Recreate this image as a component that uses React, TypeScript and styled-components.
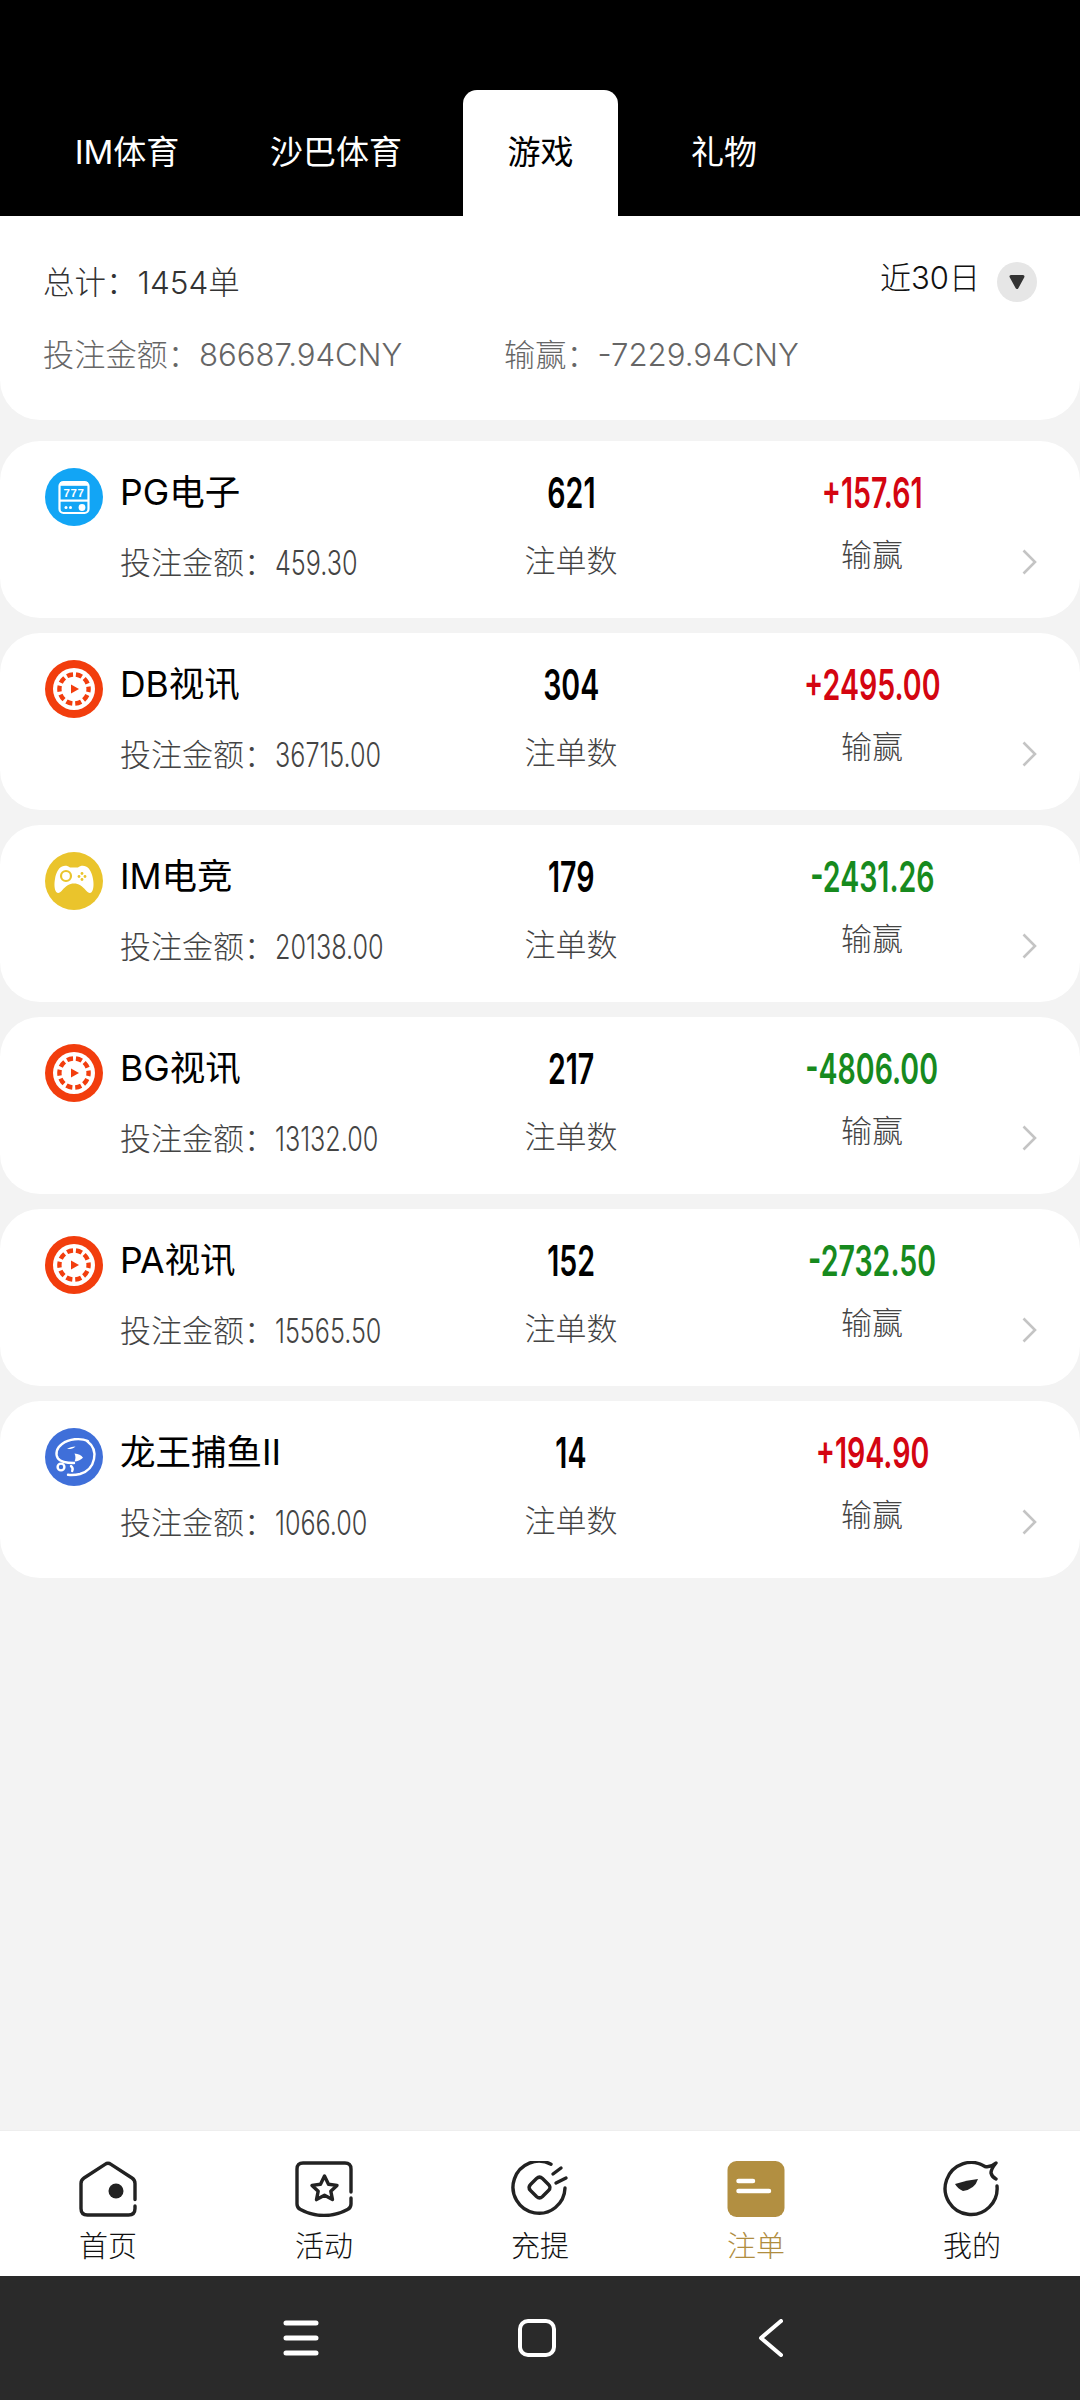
import React from "react";
import styled, { createGlobalStyle } from "styled-components";

const Global = createGlobalStyle`
  html, body { margin: 0; padding: 0; background: #f3f3f3; }
  * { box-sizing: border-box; }
  body { font-family: Inter, "Noto Sans CJK SC", "Noto Sans", sans-serif; }
`;

const Page = styled.div`
  width: 1080px;
  height: 2400px;
  display: flex;
  flex-direction: column;
  background: #f3f3f3;
  overflow: hidden;
`;

const Header = styled.header`
  height: 216px;
  flex: none;
  background: #000;
  padding: 90px 0 0 31px;
  display: flex;
  align-items: stretch;
`;

const Tab = styled.div<{ $w: number; $active?: boolean }>`
  width: ${(p) => p.$w}px;
  margin: 0 ${(p) => (p.$active ? 14 : 0)}px;
  padding-bottom: 6px;
  display: flex;
  align-items: center;
  justify-content: center;
  font-size: 33px;
  font-weight: 400;
  color: ${(p) => (p.$active ? "#000" : "#fff")};
  background: ${(p) => (p.$active ? "#fff" : "transparent")};
  border-radius: 14px 14px 0 0;
`;

const Summary = styled.section`
  height: 204px;
  flex: none;
  background: #fff;
  border-radius: 0 0 40px 40px;
  padding: 44px 43px 0 43px;
  display: flex;
  flex-direction: column;
`;

const SummaryTop = styled.div`
  display: flex;
  justify-content: space-between;
  align-items: flex-start;
  height: 72px;
`;

const Total = styled.div`
  font-size: 31.5px;
  font-weight: 300;
  line-height: 46px;
  color: #333;
`;

const Range = styled.div`
  display: flex;
  align-items: center;
  gap: 17px;
  margin-top: -7px;
  font-size: 31px;
  font-weight: 300;
  line-height: 46px;
  color: #111;
`;

const RangeButton = styled.span`
  width: 40px;
  height: 40px;
  border-radius: 50%;
  background: #e6e6e6;
  display: flex;
  align-items: center;
  justify-content: center;
  margin-top: 9px;
`;

const SummaryStats = styled.div`
  display: flex;
  font-size: 31.2px;
  font-weight: 300;
  line-height: 46px;
  color: #666;
`;

const StatCell = styled.span<{ $w?: number }>`
  width: ${(p) => (p.$w ? `${p.$w}px` : "auto")};
`;

const List = styled.main`
  flex: 1;
  padding-top: 21px;
  display: flex;
  flex-direction: column;
  gap: 15px;
`;

const Card = styled.article`
  height: 177px;
  background: #fff;
  border-radius: 40px;
  padding: 0 0 0 45px;
  display: grid;
  grid-template-columns: 426px 200px 351px 15px;
`;

const Lead = styled.div`
  display: grid;
  grid-template-columns: 58px 1fr;
  grid-template-rows: 86px 56px;
  column-gap: 17px;
`;

const GameIcon = styled.span`
  width: 58px;
  height: 58px;
  margin-top: 27px;
  display: block;
  svg {
    display: block;
  }
`;

const Name = styled.div`
  font-size: 35.5px;
  font-weight: 400;
  color: #000;
  padding-top: 27px;
  line-height: 50px;
  white-space: nowrap;
`;

const Amount = styled.div`
  grid-column: 2;
  font-size: 31px;
  font-weight: 300;
  color: #444;
  line-height: 46px;
  padding-top: 13px;
  white-space: nowrap;
  display: flex;
`;

const Narrow = styled.span<{ $scale: number; $origin?: string }>`
  display: inline-block;
  font-family: Inter, "Liberation Sans", sans-serif;
  transform: scaleX(${(p) => p.$scale});
  transform-origin: ${(p) => p.$origin ?? "center"};
`;

const AmountValue = styled(Narrow)`
  font-size: 34px;
  font-weight: 300;
  margin-top: 0;
`;

const Metric = styled.div<{ $pad?: number }>`
  display: flex;
  flex-direction: column;
  align-items: center;
  padding-left: ${(p) => p.$pad ?? 0}px;
`;

const Value = styled(Narrow)<{ $color?: string }>`
  font-size: 42px;
  font-weight: 600;
  line-height: 48px;
  margin-top: 28px;
  color: ${(p) => p.$color ?? "#000"};
`;

const Label = styled.div<{ $top: number }>`
  font-size: 31px;
  font-weight: 300;
  line-height: 46px;
  color: #444;
  margin-top: ${(p) => p.$top}px;
`;

const Chevron = styled.div`
  padding-top: 108px;
  svg {
    display: block;
  }
`;

const TabBar = styled.nav`
  height: 146px;
  flex: none;
  background: #fff;
  border-top: 1px solid #eee;
  display: grid;
  grid-template-columns: repeat(5, 1fr);
  padding-top: 30px;
`;

const BarItem = styled.div<{ $active?: boolean }>`
  display: flex;
  flex-direction: column;
  align-items: center;
  font-size: 29px;
  font-weight: 300;
  line-height: 40px;
  color: ${(p) => (p.$active ? "#b08d3f" : "#111")};
  svg {
    display: block;
    margin-bottom: 10px;
  }
`;

const SystemBar = styled.div`
  height: 124px;
  flex: none;
  background: #2a2a2a;
  display: flex;
  align-items: center;
  padding-left: 283px;
  gap: 199px;
  svg {
    display: block;
  }
`;

const SlotIcon = () => (
  <svg width="58" height="58" viewBox="0 0 58 58">
    <circle cx="29" cy="29" r="29" fill="#12a5f5" />
    <rect x="14.500" y="14" width="29" height="31" rx="4" fill="none" stroke="#fff" strokeWidth="2.200" />
    <rect x="15" y="14" width="28" height="3.800" fill="#fff" />
    <text x="29" y="28.500" textAnchor="middle" fontFamily="Liberation Sans" fontWeight="700" fontSize="11.500" fill="#fff" letterSpacing="0.600">777</text>
    <rect x="15" y="31.500" width="28" height="2.200" fill="#fff" />
    <circle cx="21" cy="39.500" r="1.500" fill="#fff" />
    <circle cx="25.500" cy="39.500" r="1.500" fill="#fff" />
    <circle cx="37" cy="39.500" r="3.400" fill="#fff" />
  </svg>
);

const ReelIcon = () => (
  <svg width="58" height="58" viewBox="0 0 58 58">
    <circle cx="29" cy="29" r="29" fill="#f23d0d" />
    <circle cx="29" cy="29" r="21" fill="#fff" />
    <circle cx="29" cy="29" r="14.600" fill="none" stroke="#f23d0d" strokeWidth="4.400" strokeDasharray="6.170 3" strokeDashoffset="3" />
    <path d="M26 24.500 34 29l-8 4.500z" fill="#f23d0d" />
  </svg>
);

const PadIcon = () => (
  <svg width="58" height="58" viewBox="0 0 58 58">
    <circle cx="29" cy="29" r="29" fill="#eac42c" />
    <path d="M17 14.500c3-1.400 6-.6 8 .9h8c2-1.500 5-2.300 8-.9 3.800 1.800 6 6.500 7 12.500 1 5.500.6 11-1.500 13.200-1.500 1.600-3.500.6-5.500-1.700-4-4.800-7.200-7-12-7s-8 2.200-12 7c-2 2.300-4 3.300-5.500 1.700C9.400 38 9 32.500 10 27c1-6 3.200-10.700 7-12.500z" fill="#fff" />
    <circle cx="21" cy="24" r="5" fill="none" stroke="#eac42c" strokeWidth="2.200" />
    <circle cx="37" cy="21.500" r="1.400" fill="#eac42c" />
    <circle cx="37" cy="27.500" r="1.400" fill="#eac42c" />
    <circle cx="34" cy="24.500" r="1.400" fill="#eac42c" />
    <circle cx="40" cy="24.500" r="1.400" fill="#eac42c" />
  </svg>
);

const FishIcon = () => (
  <svg width="58" height="58" viewBox="0 0 58 58">
    <circle cx="29" cy="29" r="29" fill="#3f6fd9" />
    <g fill="none" stroke="#fff" strokeWidth="2.400" strokeLinecap="round">
      <path d="M43 13C35 9.500 24 11 17 16c-5.500 4-7 10-4 14.500 2.500 3.500 9 4.500 16 4.500" />
      <path d="M42 13c6 4.500 8.500 11 7 18-1.500 7.500-7 13-14 15-4 1-8 1.200-12 .8" />
      <circle cx="16" cy="39" r="3.400" />
      <path d="M26 38c1.500 1.200 2 3.300 1.200 5" />
    </g>
    <path d="M22 21c2.500-1.800 5-2.600 8.500-2.600-2.200 2-5 2.900-8.500 2.600z" fill="#fff" />
    <path d="M29.500 25.500c3.800.2 7 1.800 8.500 4.300-2.300 2.500-5.500 3.600-8.500 3.700 1.300-2.600 1.300-5.400 0-8z" fill="#fff" />
  </svg>
);

const HomeGlyph = () => (
  <svg width="58" height="56" viewBox="0 0 58 56" fill="none" stroke="#222" strokeWidth="3.400" strokeLinecap="round">
    <path d="M56 38.500V22.500q0-3.500-3-5.500L32 3.300q-3-2-6 0L5 17q-3 2-3 5.500V47.500q0 6.500 6.500 6.500h41q6.500 0 6.500-6.500V45" />
    <circle cx="37" cy="30" r="7.500" fill="#222" stroke="none" />
  </svg>
);

const ActivityGlyph = () => (
  <svg width="58" height="56" viewBox="0 0 58 56" fill="none" stroke="#222" strokeWidth="3.400" strokeLinecap="round" strokeLinejoin="round">
    <path d="M56 31V8q0-6-6-6H8Q2 2 2 8v35q0 4 3.500 5.500 11 6 23.500 6t23.500-6Q56 47 56 43v-6" />
    <path d="M29.500 15l4 8.300 8.500 1.100-6.200 5.800 1.700 8.400-8-4.300-8 4.300 1.700-8.400-6.200-5.800 8.500-1.100z" />
  </svg>
);

const ChargeGlyph = () => (
  <svg width="58" height="56" viewBox="0 0 58 56" fill="none" stroke="#222" strokeWidth="3.400" strokeLinecap="round" strokeLinejoin="round">
    <path d="M40 3.200A26 26 0 1 0 54 27" />
    <path d="M25.500 17.500q3-2.800 6 0l6 6q3 3 0 6l-6 6q-3 2.800-6 0l-6-6q-3-3 0-6z" />
    <path d="M42 13l8-6M45 22l10-5" />
  </svg>
);

const OrderGlyph = () => (
  <svg width="58" height="56" viewBox="0 0 58 56">
    <rect x="0.500" width="57" height="56" rx="9" fill="#b28f41" />
    <path d="M11.500 20H26M11.500 30H42" stroke="#fff" strokeWidth="4.500" strokeLinecap="round" />
  </svg>
);

const MineGlyph = () => (
  <svg width="58" height="56" viewBox="0 0 58 56" fill="none" stroke="#222" strokeWidth="3.400" strokeLinecap="round" strokeLinejoin="round">
    <path d="M54 25A26 26 0 1 1 42 5.500Q48 6.500 53 2Q48 8 48 12Q49 16 53 18" />
    <path d="M12 23Q24 19 35 18Q32 28 20 30Q15 28 12 23z" fill="#222" stroke="none" />
  </svg>
);

const bets = [
  { name: "PG电子", icon: <SlotIcon />, amount: "459.30", count: "621", profit: "+157.61" },
  { name: "DB视讯", icon: <ReelIcon />, amount: "36715.00", count: "304", profit: "+2495.00" },
  { name: "IM电竞", icon: <PadIcon />, amount: "20138.00", count: "179", profit: "-2431.26" },
  { name: "BG视讯", icon: <ReelIcon />, amount: "13132.00", count: "217", profit: "-4806.00" },
  { name: "PA视讯", icon: <ReelIcon />, amount: "15565.50", count: "152", profit: "-2732.50" },
  { name: "龙王捕鱼II", icon: <FishIcon />, amount: "1066.00", count: "14", profit: "+194.90" },
];

const barItems = [
  { label: "首页", icon: <HomeGlyph /> },
  { label: "活动", icon: <ActivityGlyph /> },
  { label: "充提", icon: <ChargeGlyph /> },
  { label: "注单", icon: <OrderGlyph />, active: true },
  { label: "我的", icon: <MineGlyph /> },
];

export default function App() {
  return (
    <Page>
      <Global />
      <Header>
        <Tab $w={192}>IM体育</Tab>
        <Tab $w={226}>沙巴体育</Tab>
        <Tab $w={155} $active>游戏</Tab>
        <Tab $w={184}>礼物</Tab>
      </Header>
      <Summary>
        <SummaryTop>
          <Total>总计：1454单</Total>
          <Range>
            近30日
            <RangeButton>
              <svg width="18" height="16" viewBox="0 0 18 16">
                <path d="M3 2.500h12L9 13.500z" fill="#333" stroke="#333" strokeWidth="3" strokeLinejoin="round" />
              </svg>
            </RangeButton>
          </Range>
        </SummaryTop>
        <SummaryStats>
          <StatCell $w={461}>投注金额：86687.94CNY</StatCell>
          <StatCell>输赢：-7229.94CNY</StatCell>
        </SummaryStats>
      </Summary>
      <List>
        {bets.map((b) => (
          <Card key={b.name}>
            <Lead>
              <GameIcon>{b.icon}</GameIcon>
              <Name>{b.name}</Name>
              <Amount>
                投注金额：<AmountValue $scale={0.74} $origin="left">{b.amount}</AmountValue>
              </Amount>
            </Lead>
            <Metric>
              <Value $scale={0.68}>{b.count}</Value>
              <Label $top={21}>注单数</Label>
            </Metric>
            <Metric $pad={51}>
              <Value $scale={0.68} $color={b.profit.startsWith("+") ? "#d40511" : "#178a1e"}>{b.profit}</Value>
              <Label $top={15}>输赢</Label>
            </Metric>
            <Chevron>
              <svg width="15" height="26" viewBox="0 0 15 26" fill="none" stroke="#c4c4c4" strokeWidth="2.600">
                <path d="M1.500 1.500 13 13 1.500 24.500" />
              </svg>
            </Chevron>
          </Card>
        ))}
      </List>
      <TabBar>
        {barItems.map((it) => (
          <BarItem key={it.label} $active={it.active}>
            {it.icon}
            {it.label}
          </BarItem>
        ))}
      </TabBar>
      <SystemBar>
        <svg width="36" height="36" viewBox="0 0 36 36" stroke="#fff" strokeWidth="5" strokeLinecap="round">
          <path d="M3 3h30M3 18h30M3 33h30" />
        </svg>
        <svg width="38" height="38" viewBox="0 0 38 38" fill="none" stroke="#fff" strokeWidth="4">
          <rect x="2" y="2" width="34" height="34" rx="8" />
        </svg>
        <svg width="28" height="38" viewBox="0 0 28 38" fill="none" stroke="#fff" strokeWidth="4" strokeLinecap="round" strokeLinejoin="round">
          <path d="M26 2 6 19l20 17" />
        </svg>
      </SystemBar>
    </Page>
  );
}
